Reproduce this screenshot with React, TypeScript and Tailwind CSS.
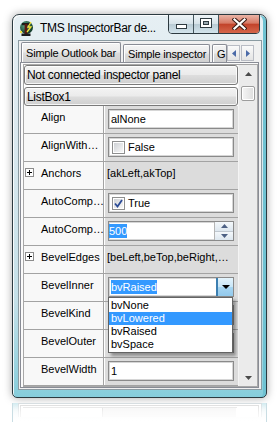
import React from "react";

function TriUp({ c = "#3d3d3d" }: { c?: string }) {
  return (
    <svg width="7" height="4" viewBox="0 0 7 4">
      <polygon points="0,4 3.5,0 7,4" fill={c} />
    </svg>
  );
}
function TriDown({ c = "#3d3d3d", w = 7, h = 4 }: { c?: string; w?: number; h?: number }) {
  return (
    <svg width={w} height={h} viewBox={`0 0 ${w} ${h}`}>
      <polygon points={`0,0 ${w / 2},${h} ${w},0`} fill={c} />
    </svg>
  );
}

function PlusBox() {
  return (
    <svg width="9" height="9" viewBox="0 0 9 9">
      <rect x="0.5" y="0.5" width="8" height="8" fill="#fff" stroke="#8c8c8c" />
      <line x1="2" y1="4.5" x2="7" y2="4.5" stroke="#000" />
      <line x1="4.5" y1="2" x2="4.5" y2="7" stroke="#000" />
    </svg>
  );
}

function Check({ checked }: { checked?: boolean }) {
  return (
    <div className="w-[13px] h-[13px] border border-[#8e8f8f] bg-white p-[1px] shrink-0">
      <div className="w-full h-full bg-[linear-gradient(135deg,#cfd2d6,#f8f8f8)] flex items-center justify-center">
        {checked && (
          <svg width="9" height="9" viewBox="0 0 9 9">
            <polyline points="1,4.5 3.5,7.5 8,1" fill="none" stroke="#2b4b96" strokeWidth="1.8" />
          </svg>
        )}
      </div>
    </div>
  );
}

function EditBox({ children }: { children: React.ReactNode }) {
  return (
    <div className="ml-[3px] mt-[3px] w-[126px] h-[20px] border border-[#8a8a8a] bg-white shadow-[inset_0_0_0_1px_#d6d6d6] flex items-center overflow-hidden">
      {children}
    </div>
  );
}

function Row({
  label,
  plus,
  children,
}: {
  label: string;
  plus?: boolean;
  children: React.ReactNode;
}) {
  return (
    <div className="flex h-[28px] border-b border-[#a3a3a3]">
      <div className="w-[79px] flex bg-[#f8f8f8]">
        <div className="w-[17px] pl-[1px] pt-[6px] shrink-0">{plus && <PlusBox />}</div>
        <div className="pt-[4px] leading-[14px] whitespace-nowrap">{label}</div>
      </div>
      <div className="w-px bg-[#a3a3a3]" />
      <div className="w-px bg-white" />
      <div className="w-[133px] bg-[#dcdcdc]">{children}</div>
    </div>
  );
}

function TitleIcon() {
  return (
    <svg width="17" height="17" viewBox="0 0 17 17">
      <defs>
        <radialGradient id="g1" cx="40%" cy="35%" r="60%">
          <stop offset="0%" stopColor="#5fa98a" />
          <stop offset="100%" stopColor="#123d2c" />
        </radialGradient>
      </defs>
      <circle cx="8.5" cy="7.5" r="6.5" fill="url(#g1)" />
      <rect x="4" y="3" width="8" height="2.2" fill="#1a1a1a" />
      <rect x="6.6" y="4" width="2.8" height="10" fill="#5a1a10" />
      <rect x="3.5" y="13.5" width="9" height="2.5" fill="#1a1a1a" />
      <polyline points="13,2 10,7 13,7 9,12" fill="none" stroke="#f2e23a" strokeWidth="1.3" />
      <circle cx="3" cy="12" r="1.2" fill="#f2e23a" />
    </svg>
  );
}

function CaptionButtons() {
  return (
    <div className="ml-auto mr-[6px] -mt-px flex h-[20px] border border-[#2d3a40] rounded-b-[4px] overflow-hidden">
      <div className="w-[24px] h-full bg-[linear-gradient(180deg,#eef4f7_0%,#d7e3e9_48%,#b9cbd4_52%,#d3e4ec_100%)] flex items-start justify-center pt-[9px]">
        <svg width="11" height="5" viewBox="0 0 11 5">
          <rect x="0.5" y="0.5" width="10" height="4" fill="#fff" stroke="#2e3a40" />
        </svg>
      </div>
      <div className="w-px bg-[#45555c]" />
      <div className="w-[24px] h-full bg-[linear-gradient(180deg,#eef4f7_0%,#d7e3e9_48%,#b9cbd4_52%,#d3e4ec_100%)] flex items-start justify-center pt-[3px]">
        <svg width="12" height="10" viewBox="0 0 12 10">
          <rect x="0.5" y="0.5" width="11" height="9" fill="#fff" stroke="#2e3a40" />
          <rect x="3.5" y="3.5" width="5" height="3" fill="#9aa9b0" stroke="#2e3a40" />
        </svg>
      </div>
      <div className="w-px bg-[#45555c]" />
      <div className="w-[40px] h-full bg-[linear-gradient(180deg,#e9b4a6_0%,#d77a66_45%,#c2432b_52%,#d5674c_100%)] flex items-start justify-center pt-[3px]">
        <svg width="15" height="12" viewBox="0 0 15 12">
          <path d="M2.5 1.5 L12.5 10.5 M12.5 1.5 L2.5 10.5" stroke="#3a1c16" strokeWidth="4.2" strokeLinecap="square" />
          <path d="M2.5 1.5 L12.5 10.5 M12.5 1.5 L2.5 10.5" stroke="#ffffff" strokeWidth="2.2" strokeLinecap="square" />
        </svg>
      </div>
    </div>
  );
}

function Tab({ w, h, children }: { w: number; h: number; children: React.ReactNode }) {
  return (
    <div
      className="shrink-0 border border-b-0 border-[#898c95] rounded-t-[2px] bg-[linear-gradient(180deg,#f4f4f4_0%,#ebebeb_48%,#dcdcdc_52%,#d0d0d0_100%)] shadow-[inset_1px_1px_0_#fff] flex items-center pl-[4px] overflow-hidden whitespace-nowrap text-[11px] tracking-[-0.2px] leading-[14px]"
      style={{ width: w, height: h }}
    >
      {children}
    </div>
  );
}

function TabArrow({ dir }: { dir: "l" | "r" }) {
  return (
    <div className="w-[13px] h-[16px] border border-[#b9bcc4] bg-[linear-gradient(180deg,#fafafa,#e4e4e4)] flex items-center justify-center">
      <svg width="4" height="7" viewBox="0 0 4 7">
        {dir === "l" ? (
          <polygon points="4,0 0,3.5 4,7" fill="#4b6aa8" />
        ) : (
          <polygon points="0,0 4,3.5 0,7" fill="#4b6aa8" />
        )}
      </svg>
    </div>
  );
}

function PanelButton({ h, children }: { h: number; children: React.ReactNode }) {
  return (
    <div
      className="w-[214px] border border-[#7a7a7a] rounded-[3px] bg-[linear-gradient(180deg,#f3f3f3_0%,#ebebeb_48%,#dddddd_52%,#cfcfcf_100%)] shadow-[inset_0_0_0_1px_rgba(255,255,255,0.8)] flex items-center pl-[2px] text-[12px] tracking-[-0.3px] whitespace-nowrap"
      style={{ height: h }}
    >
      {children}
    </div>
  );
}

function Grid() {
  return (
    <div className="relative">
      <Row label="Align">
        <EditBox>
          <span className="pl-[2px] leading-[14px]">alNone</span>
        </EditBox>
      </Row>
      <Row label="AlignWith…">
        <EditBox>
          <div className="pl-[3px] flex items-center gap-[3px]">
            <Check />
            <span className="leading-[14px]">False</span>
          </div>
        </EditBox>
      </Row>
      <Row label="Anchors" plus>
        <div className="pl-[2px] pt-[4px] leading-[14px] whitespace-nowrap">[akLeft,akTop]</div>
      </Row>
      <Row label="AutoComp…">
        <EditBox>
          <div className="pl-[3px] flex items-center gap-[3px]">
            <Check checked />
            <span className="leading-[14px]">True</span>
          </div>
        </EditBox>
      </Row>
      <Row label="AutoComp…">
        <EditBox>
          <div className="flex w-full h-full items-center">
            <span className="bg-[#3399ff] text-white leading-[14px] ml-[0px]">500</span>
            <div className="ml-auto h-full w-[19px] border-l border-[#b5b5b5] flex flex-col">
              <div className="flex-1 bg-[linear-gradient(180deg,#f4f8fb,#dde7ef)] border-b border-[#c0c8d0] flex items-center justify-center">
                <TriUp c="#4d6185" />
              </div>
              <div className="flex-1 bg-[linear-gradient(180deg,#f4f8fb,#dde7ef)] flex items-center justify-center">
                <TriDown c="#4d6185" />
              </div>
            </div>
          </div>
        </EditBox>
      </Row>
      <Row label="BevelEdges" plus>
        <div className="pl-[2px] pt-[4px] leading-[14px] whitespace-nowrap overflow-hidden">
          [beLeft,beTop,beRight,…
        </div>
      </Row>
      <Row label="BevelInner">
        <EditBox>
          <div className="flex w-full h-full items-center">
            <span className="ml-[2px] bg-[#3399ff] text-white leading-[14px]">bvRaised</span>
            <div className="ml-auto h-full w-[17px] border-l-2 border-[#3c7fb1] bg-[linear-gradient(180deg,#e3f3fc_0%,#c8e6f7_50%,#a6d5f1_52%,#92c9ec_100%)] flex items-center justify-center">
              <TriDown c="#000" w={8} h={4} />
            </div>
          </div>
        </EditBox>
      </Row>
      <Row label="BevelKind">
        <EditBox>
          <span />
        </EditBox>
      </Row>
      <Row label="BevelOuter">
        <EditBox>
          <span />
        </EditBox>
      </Row>
      <Row label="BevelWidth">
        <EditBox>
          <span className="pl-[2px] leading-[14px]">1</span>
        </EditBox>
      </Row>

      <div className="absolute left-[84px] top-[191px] w-[125px] h-[56px] border border-[#646464] bg-white py-[1px] shadow-[3px_3px_3px_rgba(0,0,0,0.35)]">
        <div className="h-[13px] leading-[13px] pl-[2px]">bvNone</div>
        <div className="h-[13px] leading-[13px] pl-[2px] bg-[#3399ff] text-white">bvLowered</div>
        <div className="h-[13px] leading-[13px] pl-[2px]">bvRaised</div>
        <div className="h-[13px] leading-[13px] pl-[2px]">bvSpace</div>
      </div>
    </div>
  );
}

function ScrollBar() {
  return (
    <div className="w-[19px] bg-[#ebebeb] border-l border-[#f4f4f4] flex flex-col items-center">
      <div className="h-[17px] w-full flex items-center justify-center">
        <TriUp c="#4a4a4a" />
      </div>
      <div className="mt-[4px] w-[14px] h-[15px] rounded-[2px] border border-[#9d9d9d] bg-[linear-gradient(90deg,#f5f5f5,#dedede)] shadow-[inset_0_0_0_1px_#fff]" />
      <div className="flex-1" />
      <div className="h-[17px] w-full flex items-center justify-center">
        <TriDown c="#4a4a4a" />
      </div>
    </div>
  );
}

function Window() {
  return (
    <div className="w-[255px] h-[384px] border border-[#2c3a40] rounded-t-[7px] rounded-b-[5px] bg-[linear-gradient(180deg,#e6eff3_0%,#d9e8ee_35%,#c4e0e8_75%,#86cddb_100%)] shadow-[inset_1px_1px_0_rgba(255,255,255,0.85),inset_-3px_0_0_#6fc2d2,0_0_9px_rgba(0,0,0,0.35)] flex flex-col">
      <div className="h-[25px] flex items-start shrink-0">
        <div className="ml-[5px] mt-[5px]">
          <TitleIcon />
        </div>
        <div className="ml-[5px] mt-[6px] text-[12px] leading-[15px] tracking-[-0.35px] whitespace-nowrap">
          TMS InspectorBar de...
        </div>
        <CaptionButtons />
      </div>
      <div className="ml-[5px] w-[244px] h-[350px] border border-[#8b9ba2] bg-[#f0f0f0] shrink-0">
        <div className="pt-[2px] pl-[2px] flex items-end h-[21px]">
          <Tab w={100} h={20}>Simple Outlook bar</Tab>
          <div className="w-[2px]" />
          <Tab w={87} h={18}>Simple inspector</Tab>
          <div className="w-[2px]" />
          <Tab w={15} h={18}>G</Tab>
          <div className="flex items-center self-start mt-[2px] gap-px">
            <TabArrow dir="l" />
            <TabArrow dir="r" />
          </div>
        </div>
        <div className="ml-[1px] w-[239px] h-[326px] border border-[#898c95] bg-[#fbfbfb]">
          <div className="ml-[2px] mt-[1px] w-[235px] h-[323px] border border-[#a8a8a8] flex bg-white">
            <div className="w-[214px] flex flex-col">
              <PanelButton h={20}>Not connected inspector panel</PanelButton>
              <div className="h-[2px]" />
              <PanelButton h={19}>ListBox1</PanelButton>
              <Grid />
            </div>
            <ScrollBar />
          </div>
        </div>
      </div>
    </div>
  );
}

function Reflection() {
  return (
    <div className="relative ml-[12px] mt-[5px] w-[255px] h-[19px] border-x border-[#c9dde3] bg-[linear-gradient(180deg,#bfe3ea_0%,#e4f1f4_35%,#ffffff_100%)]">
      <div className="ml-[5px] mt-[5px] w-[244px] h-[14px] border-t border-x border-[#c8d2d6] bg-white flex">
        <div className="ml-[1px] w-[239px] border-t border-x border-[#d0d0d0] mt-[1px] flex">
          <div className="ml-[2px] w-[214px] border-t border-[#d8d8d8] mt-[1px] flex">
            <div className="w-[80px] border-r border-[#d0d0d0]" />
            <div className="w-[133px] bg-[#f0f0f0]" />
          </div>
        </div>
      </div>
      <div className="absolute inset-0 bg-[linear-gradient(180deg,rgba(255,255,255,0.25)_0%,rgba(255,255,255,0.7)_50%,#ffffff_100%)]" />
    </div>
  );
}

export default function App() {
  return (
    <div className="w-[277px] h-[422px] bg-white overflow-hidden font-['Liberation_Sans',Arial,sans-serif] text-[11px] text-black">
      <div className="pt-[14px] pl-[12px]">
        <Window />
      </div>
      <Reflection />
    </div>
  );
}
